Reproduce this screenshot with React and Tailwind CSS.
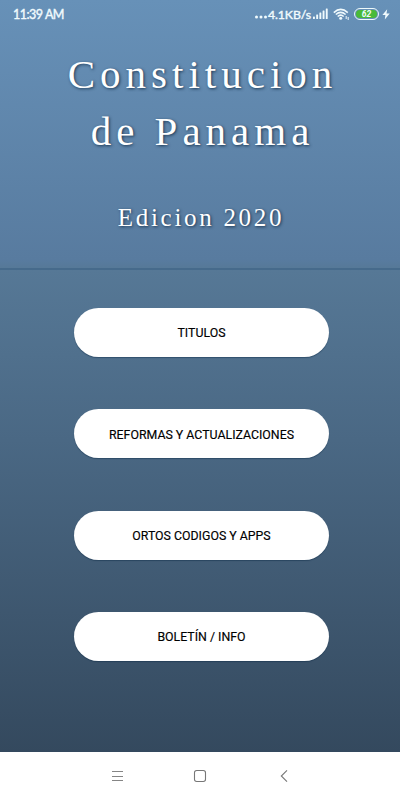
const OPTIONS = ['TITULOS', 'REFORMAS Y ACTUALIZACIONES', 'ORTOS CODIGOS Y APPS', 'BOLETÍN / INFO'];

function StatusBar() {
  return (
    <div className="flex h-7 items-center pl-[13px] pr-[10px] font-[Lato,sans-serif] leading-7 text-[#f0fafd]">
      <span className="whitespace-nowrap pt-px text-[12.5px] tracking-[-0.5px] [-webkit-text-stroke:0.4px_#f0fafd]">11:39 AM</span>
      <div className="ml-auto flex h-7 items-center">
        <svg width="15" height="28" viewBox="0 0 15 28" fill="currentColor">
          <circle cx="1.5" cy="17" r="1.5" /><circle cx="6" cy="17" r="1.5" /><circle cx="10.5" cy="17" r="1.5" />
        </svg>
        <span className="ml-[-2px] w-[45px] whitespace-nowrap pt-px text-[12.3px] tracking-[-0.1px] [-webkit-text-stroke:0.4px_#f0fafd]">4.1KB/s</span>
        <svg width="16" height="28" viewBox="0 0 16 28" fill="currentColor">
          <rect x="0" y="16.5" width="1.9" height="2.5" rx=".5" /><rect x="3.2" y="14.5" width="1.9" height="4.5" rx=".5" />
          <rect x="6.4" y="12.5" width="1.9" height="6.5" rx=".5" /><rect x="9.6" y="10.5" width="1.9" height="8.5" rx=".5" />
          <rect x="12.8" y="8.5" width="1.9" height="10.5" rx=".5" />
        </svg>
        <svg className="ml-[4px]" width="18" height="28" viewBox="0 0 18 28" fill="none" stroke="currentColor" strokeWidth="1.5">
          <path d="M.8 12.6Q7.7 6.1 14.8 12.6M2.8 14.5Q7.7 10.2 12.6 14.5M4.7 16.5Q7.7 13.8 10.7 16.5" />
          <circle cx="7.7" cy="18.3" r="1.5" fill="currentColor" stroke="none" />
          <path d="M13.2 16V19M15.2 17V20" strokeWidth="1" />
        </svg>
        <div className="ml-[3px] flex h-3 w-[25px] items-center rounded-full border border-[#eefafa] p-px">
          <div className="h-full w-[21px] rounded-full bg-[#49ba38] text-center text-[8.5px] font-bold italic leading-[8px] font-[Roboto,sans-serif]">62</div>
        </div>
        <svg className="ml-[3px]" width="8" height="28" viewBox="0 0 8 28" fill="currentColor"><path d="M5.2 9.2.4 15h3L2.8 19.5 7.7 13.5H4.5Z" /></svg>
      </div>
    </div>
  );
}

export default function App() {
  return (
    <main className="flex h-[800px] w-[400px] flex-col overflow-hidden bg-white">
      <div className="flex h-[752px] flex-col bg-[linear-gradient(180deg,#6791b8_0px,#587b9f_260px,#567896_270px,#4a6884_440px,#34495e_752px)]">
        <header className="h-[268px]">
          <StatusBar />
          <div className="pt-[18px] text-center font-['Liberation_Serif',serif] text-white [text-shadow:1px_1px_3px_#102b45dd]">
            <h1 className="pl-[5px] text-[41px] leading-[57px] tracking-[5px]">Constitucion<br />de Panama</h1>
            <p className="mt-[42px] pl-[2px] text-[25px] leading-8 tracking-[2.7px]">Edicion 2020</p>
          </div>
        </header>
        <div className="h-[2px] shrink-0 bg-[#466a8b]" />
        <nav className="ml-[74px] flex w-[255px] flex-col gap-[52.3px] pt-[38px]">
          {OPTIONS.map((option) => (
            <button key={option} className="h-[49px] rounded-full bg-white pt-[2px] text-[12.35px] font-normal text-black shadow-[0_1px_1px_#0b294570] [-webkit-text-stroke:0.15px_#000] font-[Roboto,sans-serif]">{option}</button>
          ))}
        </nav>
      </div>
      <footer className="flex h-12 items-center bg-white">
        <svg className="ml-[111px]" width="13" height="12" viewBox="0 0 13 12" stroke="#858585" strokeWidth="1"><path d="M1 1.5H12M1 6.5H12M1 10.5H12" /></svg>
        <svg className="ml-[69px]" width="14" height="14" viewBox="0 0 14 14" fill="none" stroke="#777" strokeWidth="1.1"><rect x="1.5" y="1.5" width="11" height="11" rx="2.2" /></svg>
        <svg className="ml-[73px]" width="8" height="14" viewBox="0 0 8 14" fill="none" stroke="#777" strokeWidth="1.1"><path d="M7 1.3 1.3 7 7 12.7" /></svg>
      </footer>
    </main>
  );
}
